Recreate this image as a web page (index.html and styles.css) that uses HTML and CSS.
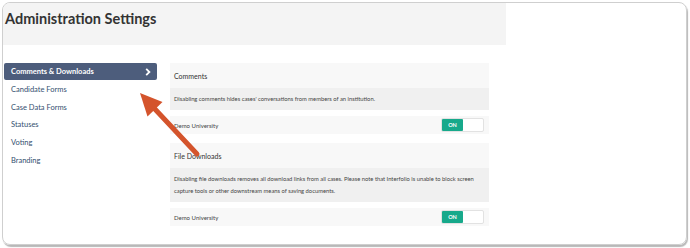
FILE: index.html
```html
<!DOCTYPE html>
<html lang="en">
<head>
  <meta charset="UTF-8">
  <meta name="viewport" content="width=device-width, initial-scale=1.0">
  <title>Administration Settings</title>
  <link rel="stylesheet" href="styles.css">
</head>
<body>
  <div class="frame">
    <header class="page-head">
      <h1>Administration Settings</h1>
    </header>

    <div class="layout">
      <!-- Menu lateral -->
      <nav class="side">
        <a class="side-item active" href="#">Comments &amp; Downloads
          <svg class="chev" viewBox="0 0 6 8" width="6" height="8"><path d="M1.2 0.8 L4.4 4 L1.2 7.2" fill="none" stroke="#fff" stroke-width="1.8"/></svg>
        </a>
        <a class="side-item" href="#">Candidate Forms</a>
        <a class="side-item" href="#">Case Data Forms</a>
        <a class="side-item" href="#">Statuses</a>
        <a class="side-item" href="#">Voting</a>
        <a class="side-item" href="#">Branding</a>
      </nav>

      <main class="panels">
        <section class="setting">
          <div class="setting-title">Comments</div>
          <div class="setting-desc">Disabling comments hides cases' conversations from members of an institution.</div>
          <div class="setting-row">
            <span>Demo University</span>
            <span class="toggle"><span class="toggle-on">ON</span></span>
          </div>
        </section>

        <section class="setting">
          <div class="setting-title">File Downloads</div>
          <div class="setting-desc">Disabling file downloads removes all download links from all cases. Please note that Interfolio is unable to block screen<br>capture tools or other downstream means of saving documents.</div>
          <div class="setting-row">
            <span>Demo University</span>
            <span class="toggle"><span class="toggle-on">ON</span></span>
          </div>
        </section>
      </main>
    </div>

    <!-- Flecha de anotación -->
    <svg class="callout" width="690" height="248" viewBox="0 0 690 248">
      <line x1="153" y1="107" x2="197" y2="154" stroke="#d4542c" stroke-width="5" stroke-linecap="round"/>
      <polygon points="140,93 162.5,102 147.5,116.5" fill="#d4542c"/>
    </svg>
  </div>
</body>
</html>
```

FILE: styles.css
```css
/* Colores */
:root {
  --head-bg: #f4f4f4;
  --row-bg: #f8f8f8;
  --desc-bg: #f0f0f0;
  --nav: #34506f;
  --nav-active: #4d5d7c;
  --green: #17a98b;
  --text: #333333;
}

* { margin: 0; padding: 0; box-sizing: border-box; }
body {
  font-family: Lato, 'Open Sans', sans-serif;
  background: #fff;
  color: var(--text);
  width: 690px;
  height: 248px;
  overflow: hidden;
}

.frame {
  position: relative;
  margin: 2px 0 0 2px;
  width: 685px;
  height: 243px;
  border: 1px solid #cfcfcf;
  border-radius: 8px;
  box-shadow: 1px 2px 1px rgba(0,0,0,0.28);
  overflow: hidden;
}

/* Cabecera */
.page-head {
  width: 503px;
  height: 42px;
  background: var(--head-bg);
  padding: 8px 0 0 2px;
}
.page-head h1 {
  font-size: 14.5px;
  font-weight: 700;
  line-height: 15px;
  color: #333;
}

.layout {
  display: flex;
  align-items: flex-start;
  gap: 13px;
  padding: 18px 0 0 1px;
}

/* Menu lateral */
.side {
  width: 153px;
  display: flex;
  flex-direction: column;
}
.side-item {
  display: flex;
  align-items: center;
  justify-content: space-between;
  height: 17.7px;
  padding: 0 6px 0 7px;
  font-size: 7.5px;
  color: var(--nav);
  text-decoration: none;
}
.side-item.active {
  height: 17px;
  margin-bottom: 0.7px;
  background: var(--nav-active);
  color: #fff;
  font-weight: 700;
  border-radius: 2px;
}

/* Paneles */
.panels {
  width: 319px;
  display: flex;
  flex-direction: column;
  gap: 9px;
}
.setting { display: flex; flex-direction: column; }
.setting-title {
  height: 25px;
  padding: 0 4px;
  display: flex;
  align-items: center;
  background: var(--row-bg);
  font-size: 7px;
  color: #333;
}
.setting-desc {
  background: var(--desc-bg);
  padding: 5px 4px;
  font-size: 5.8px;
  line-height: 12px;
  color: #444;
  white-space: nowrap;
}
.setting-row {
  margin-top: 6px;
  height: 18px;
  padding: 0 5px 0 4px;
  display: flex;
  align-items: center;
  justify-content: space-between;
  background: var(--row-bg);
  font-size: 6px;
  color: #444;
}
.toggle {
  width: 43px;
  height: 14px;
  background: #fff;
  border: 1px solid #e2e2e2;
  border-radius: 2px;
  display: flex;
}
.toggle-on {
  width: 21px;
  height: 12px;
  background: var(--green);
  color: #fff;
  font-size: 5.5px;
  font-weight: 700;
  display: flex;
  align-items: center;
  justify-content: center;
  border-radius: 1px;
}

.callout {
  position: absolute;
  left: -3px;
  top: -3px;
  pointer-events: none;
}
```
